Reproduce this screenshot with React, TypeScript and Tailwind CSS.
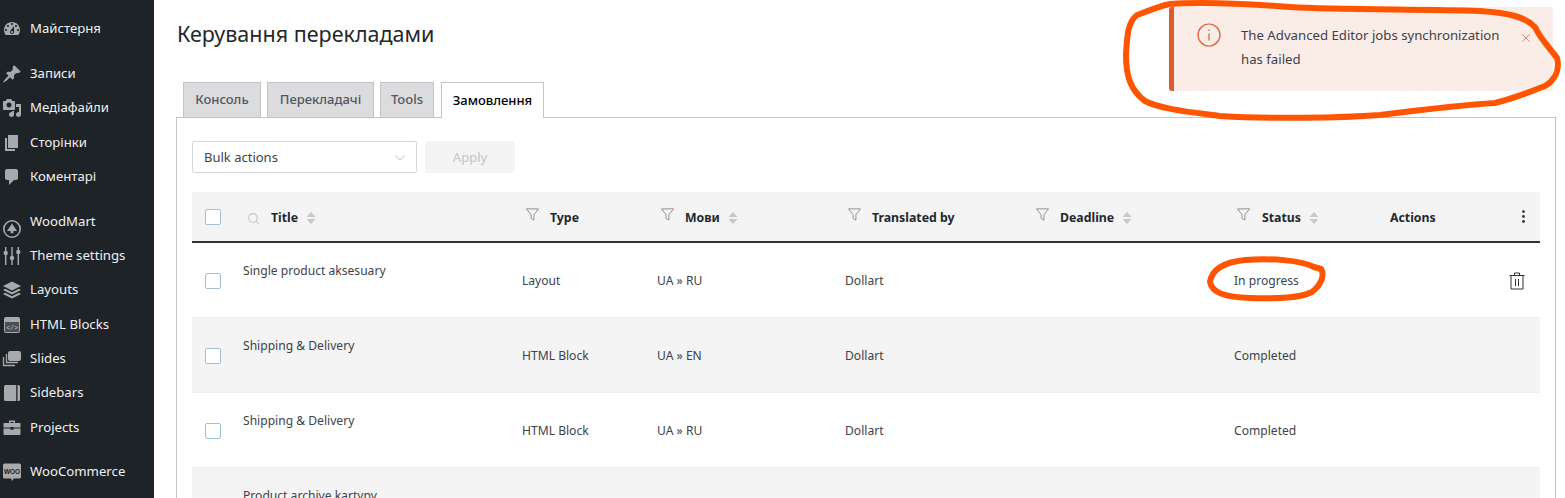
import React from 'react';
import { ChevronDown, EllipsisVertical, Search, X } from 'lucide-react';

const font = { fontFamily: '"Noto Sans", "Open Sans", sans-serif' };

const Dash = ({ d }: { d: string }) => (
  <svg viewBox="0 0 20 20" className="w-[20px] h-[20px] fill-[#a7aaad]">
    <path d={d} />
  </svg>
);

const icons: Record<string, React.ReactNode> = {
  dashboard: <Dash d="M3.76 16h12.48c1.1-1.37 1.76-3.11 1.76-5 0-4.42-3.58-8-8-8s-8 3.58-8 8c0 1.89.66 3.63 1.76 5zM10 4c.55 0 1 .45 1 1s-.45 1-1 1-1-.45-1-1 .45-1 1-1zM6 6c.55 0 1 .45 1 1s-.45 1-1 1-1-.45-1-1 .45-1 1-1zm8 0c.55 0 1 .45 1 1s-.45 1-1 1-1-.45-1-1 .45-1 1-1zm-5.37 5.55L12 7v6c0 1.1-.9 2-2 2s-2-.9-2-2c0-.57.24-1.08.63-1.45zM4 10c.55 0 1 .45 1 1s-.45 1-1 1-1-.45-1-1 .45-1 1-1zm12 0c.55 0 1 .45 1 1s-.45 1-1 1-1-.45-1-1 .45-1 1-1zm-5 3c0-.55-.45-1-1-1s-1 .45-1 1 .45 1 1 1 1-.45 1-1z" />,
  post: <Dash d="M10.44 3.02l1.82-1.82 6.36 6.35-1.83 1.82c-1.05-.68-2.48-.57-3.41.36l-.75.75c-.92.93-1.04 2.35-.35 3.41l-1.83 1.82-2.41-2.41-2.8 2.79c-.42.42-3.38 2.71-3.8 2.29s1.86-3.39 2.28-3.81l2.79-2.79L4.1 9.36l1.83-1.82c1.05.69 2.48.57 3.4-.36l.75-.75c.93-.92 1.05-2.35.36-3.41z" />,
  media: <Dash d="M13 11V4c0-.55-.45-1-1-1h-1.67L9 1H5L3.67 3H2c-.55 0-1 .45-1 1v7c0 .55.45 1 1 1h10c.55 0 1-.45 1-1zM7 4.5c1.38 0 2.5 1.12 2.5 2.5S8.38 9.5 7 9.5 4.5 8.38 4.5 7 5.62 4.5 7 4.5zM14 6h5v10.5c0 1.38-1.12 2.5-2.5 2.5S14 17.88 14 16.5s1.12-2.5 2.5-2.5c.17 0 .34.02.5.05V9h-3V6zm-4 8.05V13h2v3.5c0 1.38-1.12 2.5-2.5 2.5S7 17.88 7 16.5 8.12 14 9.5 14c.17 0 .34.02.5.05z" />,
  pages: <Dash d="M6 15V2h10v13H6zm-1 1h8v2H3V5h2v11z" />,
  comments: <Dash d="M5 2h9c1.1 0 2 .9 2 2v7c0 1.1-.9 2-2 2h-2l-5 5v-5H5c-1.1 0-2-.9-2-2V4c0-1.1.9-2 2-2z" />,
  woodmart: (
    <svg viewBox="0 0 20 20" className="w-[20px] h-[20px] translate-y-[7px]">
      <circle cx="10" cy="10" r="8.2" fill="none" stroke="#a7aaad" strokeWidth="1.6" />
      <path d="M10 4.5 15 12h-3.6v2.2H8.6V12H5z" fill="#a7aaad" />
    </svg>
  ),
  settings: (
    <svg viewBox="0 0 20 20" className="w-[20px] h-[20px] fill-[#a7aaad]">
      <path d="M3 1h1.4v4.2H3zM3 9h1.4v10H3zM9.3 1h1.4v9H9.300zM9.300 14h1.400v5H9.300zM15.600 1h1.400v3.200h-1.400zM15.600 8h1.400v11h-1.400z" />
      <circle cx="3.700" cy="7" r="2.200" />
      <circle cx="10" cy="12" r="2.200" />
      <circle cx="16.300" cy="6" r="2.200" />
    </svg>
  ),
  layouts: (
    <svg viewBox="0 0 20 20" className="w-[20px] h-[20px] fill-[#a7aaad]">
      <path d="M10 1.500 19 6l-9 4.500L1 6z" />
      <path d="M3.200 8.800 10 12.200l6.800-3.400L19 10l-9 4.500L1 10z" />
      <path d="M3.200 12.800 10 16.200l6.800-3.400L19 14l-9 4.500L1 14z" />
    </svg>
  ),
  blocks: (
    <svg viewBox="0 0 20 20" className="w-[20px] h-[20px]">
      <rect x="2" y="2" width="16" height="16" rx="2" fill="#a7aaad" />
      <rect x="3" y="7" width="14" height="10" fill="#4a5056" />
      <text x="10" y="14.500" textAnchor="middle" fontSize="6.500" fill="#c8cacc" fontFamily="Liberation Mono, monospace">{'</>'}</text>
    </svg>
  ),
  slides: (
    <svg viewBox="0 0 20 20" className="w-[20px] h-[20px]">
      <rect x="6" y="2" width="13" height="10" rx="2" fill="#a7aaad" />
      <path d="M4.500 5v8.500H16M1.500 8v8.500H13" fill="none" stroke="#a7aaad" strokeWidth="1.300" />
    </svg>
  ),
  sidebars: (
    <svg viewBox="0 0 20 20" className="w-[20px] h-[20px]">
      <rect x="2" y="2" width="16" height="16" rx="1.500" fill="#a7aaad" />
      <rect x="14.200" y="2" width="1.300" height="16" fill="#1d2327" />
    </svg>
  ),
  projects: (
    <svg viewBox="0 0 20 20" className="w-[20px] h-[20px] fill-[#a7aaad]">
      <path d="M7 3.500h6V6h-1.400V5H8.400v1H7z" />
      <path d="M1.500 7c0-.6.4-1 1-1h15c.6 0 1 .4 1 1v3.500h-7V10h-3v.5h-7zM1.500 11.500h7v1.200h3v-1.200h7V17c0 .6-.4 1-1 1h-15c-.6 0-1-.4-1-1z" />
    </svg>
  ),
  woo: (
    <svg viewBox="0 0 20 20" className="w-[20px] h-[20px]">
      <path d="M2.500 1.500h15c.8 0 1.500.7 1.500 1.500v12c0 .8-.7 1.500-1.500 1.500h-5.700L10 19l-1-2.500H2.500C1.700 16.500 1 15.800 1 15V3c0-.8.700-1.500 1.500-1.500z" fill="#a7aaad" />
      <text x="10" y="11.500" textAnchor="middle" fontSize="6.500" fontWeight="700" fill="#1d2327" fontFamily="Liberation Sans, sans-serif">WOO</text>
    </svg>
  ),
};

const menu = [
  { items: [['dashboard', 'Майстерня']], gap: 'mt-[11.5px]' },
  { items: [['post', 'Записи'], ['media', 'Медіафайли'], ['pages', 'Сторінки'], ['comments', 'Коментарі']], gap: 'mt-[11px]' },
  { items: [['woodmart', 'WoodMart'], ['settings', 'Theme settings'], ['layouts', 'Layouts'], ['blocks', 'HTML Blocks'], ['slides', 'Slides'], ['sidebars', 'Sidebars'], ['projects', 'Projects']], gap: 'mt-[10.5px]' },
  { items: [['woo', 'WooCommerce']], gap: 'mt-[10px]' },
];

const Filter = () => (
  <svg viewBox="0 0 16 16" className="w-[15px] h-[15px] fill-none stroke-[#8c8c8c] -mt-[7px]">
    <path d="M1.500 2h13L9.500 8.200V14l-3-1.800V8.200z" strokeLinejoin="round" />
  </svg>
);

const Sort = () => (
  <svg viewBox="0 0 10 14" className="w-[10px] h-[14px] fill-[#c8c8c8] ml-[8px]">
    <path d="M5 1 9.500 6h-9zM5 13 .5 8h9z" />
  </svg>
);

const Check = () => (
  <span className="block w-[16px] h-[16px] border border-[#9fc3d3] rounded-[2px] bg-white" />
);

// label and its sort arrows stay together, the funnel sits a fixed gap before them
const Label = ({ text, sort }: { text: string; sort?: boolean }) => (
  <span className="flex items-center">
    {text}
    {sort && <Sort />}
  </span>
);

const columns = 'grid grid-cols-[51px_279px_135px_188px_188px_201px_156px_1fr]';

const rows = [
  ['Single product aksesuary', 'Layout', 'UA » RU', 'Dollart', 'In progress'],
  ['Shipping & Delivery', 'HTML Block', 'UA » EN', 'Dollart', 'Completed'],
  ['Shipping & Delivery', 'HTML Block', 'UA » RU', 'Dollart', 'Completed'],
  ['Product archive kartypy', 'Layout', 'UA » RU', 'Dollart', 'Completed'],
];

const tabs = [
  { label: 'Консоль', width: 'w-[78px]' },
  { label: 'Перекладачі', width: 'w-[107px]' },
  { label: 'Tools', width: 'w-[54px]' },
];

export default function App() {
  return (
    <div className="relative flex h-[498px] w-[1565px] overflow-hidden bg-white" style={font}>
      {/* sidebar */}
      <aside className="w-[154px] shrink-0 bg-[#1d2327] text-[13.2px] text-[#f0f0f1]">
        {menu.map((group, i) => (
          <div key={i} className={group.gap}>
            {group.items.map(([icon, label]) => (
              <div key={label} className="flex h-[34.3px] items-center">
                <span className="flex w-[30px] pl-[2px]">{icons[icon]}</span>
                <span>{label}</span>
              </div>
            ))}
          </div>
        ))}
      </aside>

      <main className="flex-1 pl-[22px] pr-[9px] min-w-0">
        <h1 className="pt-[19px] pl-px text-[21.5px] leading-[30px] text-[#23282d]">Керування перекладами</h1>

        <div className="mt-[32px] flex items-end gap-[6px] pl-[7px] h-[36px]">
          {tabs.map(tab => (
            <div key={tab.label} className={`flex h-[35px] ${tab.width} items-center justify-center border border-b-0 border-[#c3c4c7] bg-[#dcdcde] text-[13px] font-medium text-[#50575e]`}>
              {tab.label}
            </div>
          ))}
          <div className="relative z-10 -mb-px ml-px flex h-[36px] w-[103px] items-center justify-center border border-b-0 border-[#c3c4c7] bg-white text-[13px] font-medium text-black">
            Замовлення
          </div>
        </div>

        <section className="h-[400px] border border-[#c3c4c7] px-[15px] pt-[23px]">
          <div className="flex gap-[8px]">
            <div className="flex h-[32px] w-[225px] items-center justify-between rounded-[2px] border border-[#d8d8d8] pl-[11px] pr-[7px] pt-px text-[13px] text-[#3c434a]">
              Bulk actions
              <ChevronDown size={18} strokeWidth={1} className="text-[#aaa]" />
            </div>
            <div className="flex h-[32px] w-[90px] items-center justify-center rounded-[2px] bg-[#f4f4f4] pt-px text-[13px] text-[#c4c4c4]">Apply</div>
          </div>

          <div className={`${columns} mt-[19px] h-[51px] items-center border-b-2 border-[#333] bg-[#f4f4f4] pt-[3px] text-[12.3px] font-bold text-[#23282d]`}>
            <div className="pl-[13px] -mt-[3px]"><Check /></div>
            <div className="flex items-center pl-[4px]">
              <Search size={13} strokeWidth={2} className="mr-[11px] text-[#c4c4c4]" />
              <Label text="Title" sort />
            </div>
            <div className="flex items-center gap-[10px] pl-[3px]"><Filter /><Label text="Type" /></div>
            <div className="flex items-center gap-[10px] pl-[3px]"><Filter /><Label text="Мови" sort /></div>
            <div className="flex items-center gap-[10px] pl-[2px]"><Filter /><Label text="Translated by" /></div>
            <div className="flex items-center gap-[10px] pl-[2px]"><Filter /><Label text="Deadline" sort /></div>
            <div className="flex items-center gap-[11px] pl-[2px]"><Filter /><Label text="Status" sort /></div>
            <div className="flex items-center justify-between pr-[8px]">
              Actions
              <EllipsisVertical size={17} strokeWidth={2} className="text-[#333] -mt-[3px]" />
            </div>
          </div>

          {rows.map((row, i) => (
            <div key={i} className={`${columns} h-[75px] items-center border-b border-[#eeeeee] pt-[3px] text-[12.1px] text-[#3c434a] ${i % 2 === 1 ? 'bg-[#f4f4f4]' : 'bg-white'}`}>
              <div className="pl-[13px] -mt-[2px]"><Check /></div>
              <div className="self-start pt-[16px]">{row[0]}</div>
              <div>{row[1]}</div>
              <div>{row[2]}</div>
              <div>{row[3]}</div>
              <div />
              <div>{row[4]}</div>
              <div className="flex justify-end pr-[15px] -mt-[2px]">
                {i === 0 && (
                  <svg viewBox="0 0 16 18" className="h-[18px] w-[16px] fill-none stroke-[#333]">
                    <path d="M.5 3.500h15M5.500 3.500V1h5v2.500M2 3.500V17h12V3.500M6.500 7v7M9.500 7v7" />
                  </svg>
                )}
              </div>
            </div>
          ))}
        </section>
      </main>

      {/* toast */}
      <div className="absolute left-[1169px] top-[7px] flex h-[84px] w-[384px] rounded-[3px] border-l-[5px] border-[#de5b2e] bg-[#faece7] text-[13.2px] leading-[24px] text-[#3c434a]">
        <svg viewBox="0 0 24 24" className="ml-[23px] mt-[16px] h-[24px] w-[24px] shrink-0 fill-none stroke-[#de5b2e]" strokeWidth="1.200">
          <circle cx="12" cy="12" r="11" />
          <path d="M12 10.500v7M12 6.500v1.500" />
        </svg>
        <div className="ml-[20px] mt-[16px] w-[272px]">The Advanced Editor jobs synchronization has failed</div>
        <X size={14} strokeWidth={1.3} className="mt-[24px] ml-[6px] text-[#e8604f]" />
      </div>

      {/* hand drawn marks */}
      <svg className="pointer-events-none absolute inset-0 h-[498px] w-[1565px] fill-none stroke-[#ff5500]" strokeWidth="6" strokeLinejoin="round" strokeLinecap="round">
        <path d="M1170 4C1200 2 1250 4 1290 7C1340 10 1420 9 1480 11C1510 13 1525 17 1535 27C1541 40 1550 48 1557 58C1560 70 1555 80 1545 86C1530 92 1515 98 1495 103C1460 105 1420 110 1380 115C1340 118 1270 119 1220 116C1190 112 1160 109 1145 101C1130 90 1126 75 1126 55C1127 35 1128 22 1137 15C1150 10 1160 6 1170 4Z" />
        <path d="M1314 267C1300 260 1270 258 1245 260C1225 262 1212 268 1210 282C1212 293 1225 297 1250 298C1280 299 1300 298 1312 292C1321 285 1325 275 1321 269Z" />
      </svg>
    </div>
  );
}
